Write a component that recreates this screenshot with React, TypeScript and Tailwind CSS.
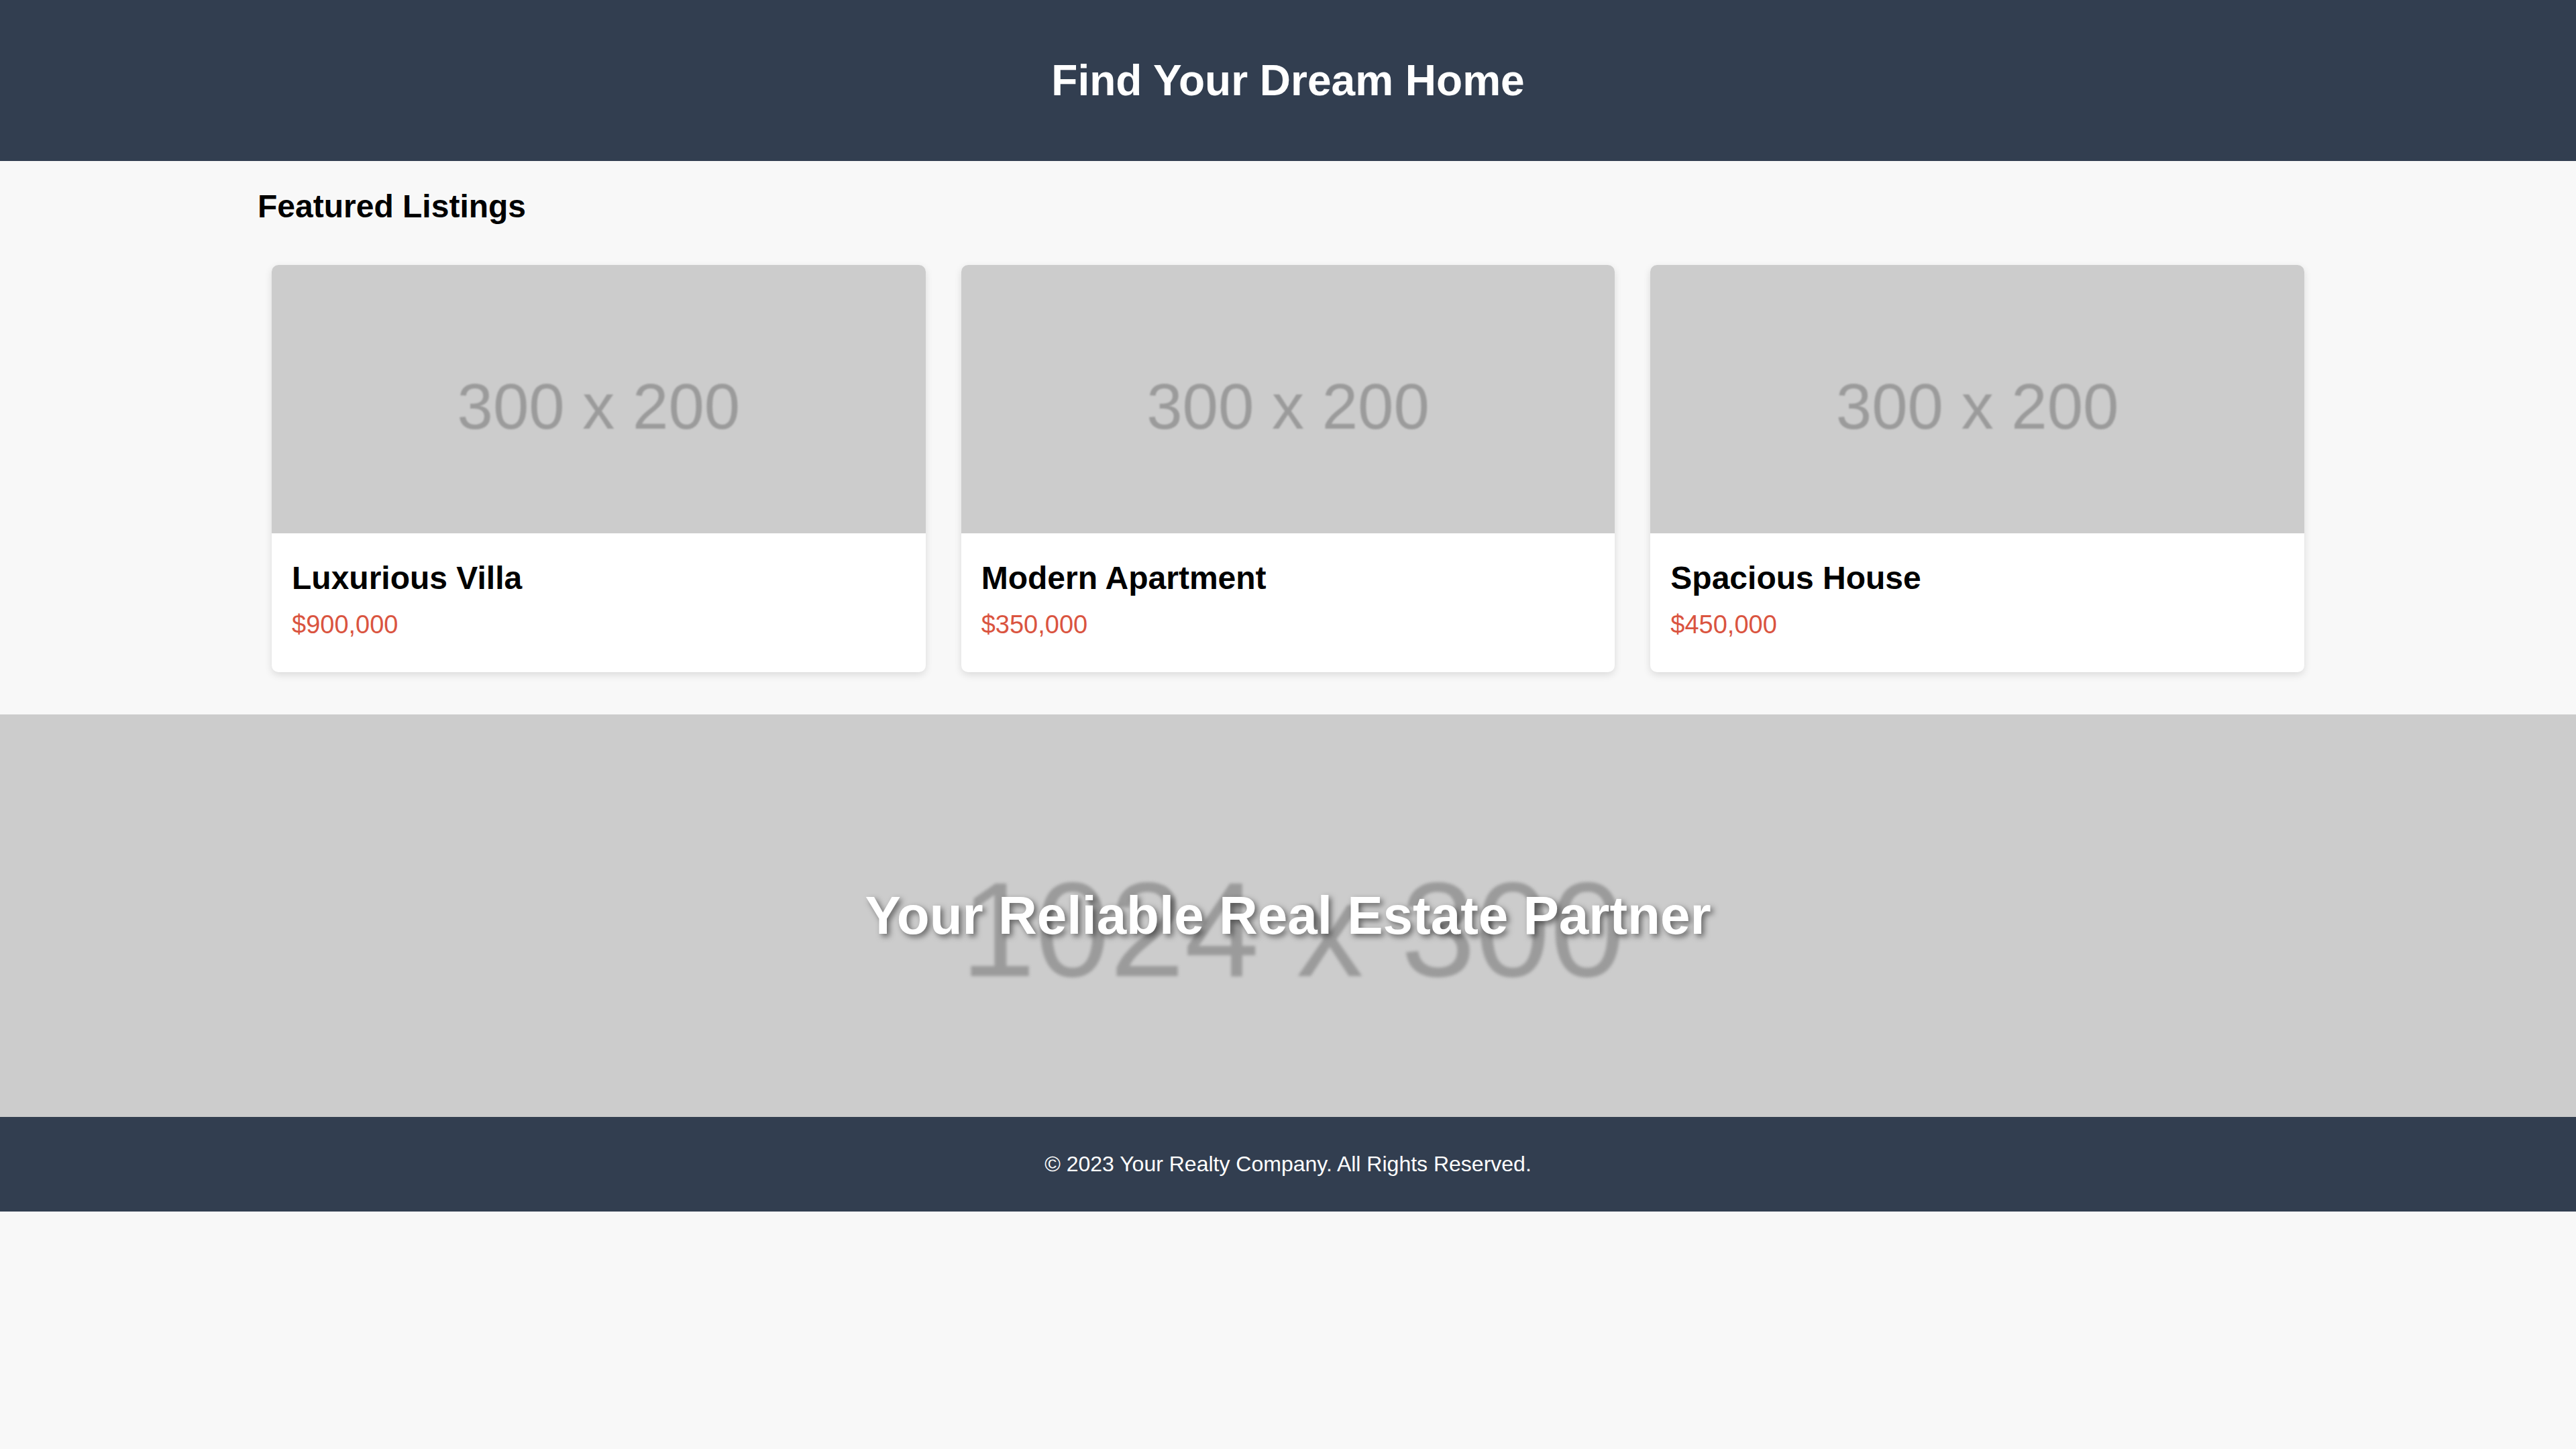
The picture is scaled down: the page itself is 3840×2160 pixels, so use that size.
import React from 'react';

interface Listing {
  id: number;
  title: string;
  price: string;
}

const listings: Listing[] = [
  { id: 1, title: 'Luxurious Villa', price: '$900,000' },
  { id: 2, title: 'Modern Apartment', price: '$350,000' },
  { id: 3, title: 'Spacious House', price: '$450,000' },
];

// grey placeholder block, like the ones from a placeholder image service
const Placeholder: React.FC<{ label: string; className: string; textClass: string }> = ({
  label,
  className,
  textClass,
}) => (
  <div className={`bg-[#cccccc] flex items-center justify-center overflow-hidden ${className}`}>
    <span className={`text-[#9b9b9b] whitespace-nowrap ${textClass}`}>{label}</span>
  </div>
);

const ListingCard: React.FC<{ listing: Listing }> = ({ listing }) => (
  <div className="bg-white rounded-[10px] overflow-hidden shadow-[0_4px_12px_rgba(0,0,0,0.12)]">
    <Placeholder
      label="300 x 200"
      className="h-[400px] pt-[22px]"
      textClass="text-[96px] leading-[110px] blur-[1px]"
    />
    <div className="pt-[39px] px-[30px] pb-[49px]">
      <h3 className="text-[48px] leading-[55px] font-bold text-black mb-[20px]">
        {listing.title}
      </h3>
      <p className="text-[38px] leading-[44px] text-[#da5440]">{listing.price}</p>
    </div>
  </div>
);

export default function App() {
  return (
    <div className="min-h-screen bg-[#f8f8f8] font-['Liberation_Sans',Arial,sans-serif]">
      {/* Header */}
      <header className="bg-[#323e50] text-white text-center py-[83px]">
        <h1 className="text-[64px] leading-[74px] font-bold">Find Your Dream Home</h1>
      </header>

      {/* Featured listings */}
      <main className="w-[3072px] mx-auto pt-[40px] pb-[63px]">
        <h2 className="text-[48px] leading-[55px] font-bold text-black mb-[60px]">
          Featured Listings
        </h2>
        <div className="grid grid-cols-3 gap-[53px] px-[21px]">
          {listings.map((listing) => (
            <ListingCard key={listing.id} listing={listing} />
          ))}
        </div>
      </main>

      {/* Banner */}
      <section className="relative">
        <Placeholder
          label="1024 x 300"
          className="h-[600px] pt-[42px] pl-[14px]"
          textClass="text-[200px] leading-[230px] blur-[2px]"
        />
        <div className="absolute inset-0 flex items-center justify-center">
          <h2 className="text-[80px] leading-[92px] font-bold text-white [text-shadow:4px_4px_8px_rgba(0,0,0,0.5)]">
            Your Reliable Real Estate Partner
          </h2>
        </div>
      </section>

      {/* Footer */}
      <footer className="bg-[#323e50] text-white text-center py-[52px]">
        <p className="text-[32px] leading-[37px]">© 2023 Your Realty Company. All Rights Reserved.</p>
      </footer>
    </div>
  );
}
